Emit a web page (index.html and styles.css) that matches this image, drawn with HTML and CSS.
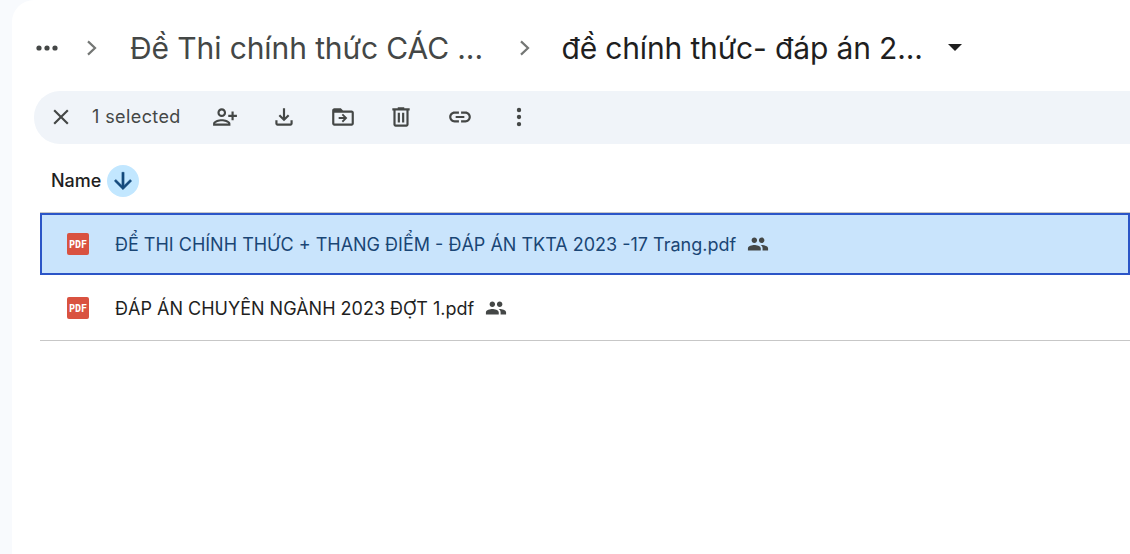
FILE: index.html
```html
<!DOCTYPE html>
<html lang="vi">
<head>
<meta charset="utf-8">
<title>Drive</title>
<link rel="stylesheet" href="styles.css">
</head>
<body>
<main class="card">
  <nav class="crumbs">
    <svg class="dots" viewBox="0 0 22 6"><circle cx="3" cy="3" r="2.6"/><circle cx="11" cy="3" r="2.6"/><circle cx="19" cy="3" r="2.6"/></svg>
    <svg class="chev" viewBox="0 0 12 16"><path d="M2 1.400 9 8l-7 6.600" fill="none" stroke-width="2.200"/></svg>
    <span class="crumb parent">Đề Thi chính thức CÁC ...</span>
    <svg class="chev chev-2" viewBox="0 0 12 16"><path d="M2 1.400 9 8l-7 6.600" fill="none" stroke-width="2.200"/></svg>
    <span class="crumb current">đề chính thức- đáp án 2...</span>
    <svg class="caret" viewBox="0 0 14 7"><path d="M0 0h14L7 7z"/></svg>
  </nav>

  <div class="toolbar">
    <svg class="tool close" viewBox="0 0 24 24"><path d="M19 6.410 17.590 5 12 10.590 6.410 5 5 6.410 10.590 12 5 17.590 6.410 19 12 13.410 17.590 19 19 17.590 13.410 12z"/></svg>
    <span class="count">1 selected</span>
    <svg class="tool flip" viewBox="0 0 24 24"><path d="M15 12c2.210 0 4-1.790 4-4s-1.790-4-4-4-4 1.790-4 4 1.790 4 4 4zm0-6c1.100 0 2 .9 2 2s-.9 2-2 2-2-.9-2-2 .9-2 2-2zm0 8c-2.670 0-8 1.340-8 4v2h16v-2c0-2.660-5.330-4-8-4zm-6 4c.22-.72 3.310-2 6-2 2.700 0 5.800 1.290 6 2H9zm-3-3v-3h3v-2H6V7H4v3H1v2h3v3h2z"/></svg>
    <svg class="tool" viewBox="0 0 24 24"><path d="M18 15v3H6v-3H4v3c0 1.100.9 2 2 2h12c1.100 0 2-.9 2-2v-3h-2zm-1-4-1.410-1.410L13 12.170V4h-2v8.170L8.410 9.590 7 11l5 5 5-5z"/></svg>
    <svg class="tool" viewBox="0 0 24 24"><path d="M20 6h-8l-2-2H4c-1.100 0-2 .9-2 2v12c0 1.100.9 2 2 2h16c1.100 0 2-.9 2-2V8c0-1.100-.9-2-2-2zm0 12H4V8h16v10z"/><path d="M12 9 10.800 10.200l1.900 1.900H8v1.800h4.700l-1.900 1.900L12 17l4-4z"/></svg>
    <svg class="tool" viewBox="0 0 24 24"><path d="M15 4V3H9v1H4v2h1v13c0 1.100.9 2 2 2h10c1.100 0 2-.9 2-2V6h1V4h-5zm2 15H7V6h10v13zM9 8h2v9H9zm4 0h2v9h-2z"/></svg>
    <svg class="tool" viewBox="0 0 24 24"><path d="M17 7h-4v2h4c1.650 0 3 1.350 3 3s-1.350 3-3 3h-4v2h4c2.760 0 5-2.240 5-5s-2.240-5-5-5zm-6 8H7c-1.650 0-3-1.350-3-3s1.350-3 3-3h4V7H7c-2.760 0-5 2.240-5 5s2.240 5 5 5h4v-2zm-3-4h8v2H8z"/></svg>
    <svg class="tool" viewBox="0 0 24 24"><circle cx="12" cy="5.500" r="2"/><circle cx="12" cy="12" r="2"/><circle cx="12" cy="18.500" r="2"/></svg>
  </div>

  <div class="list-head">
    <span class="name-label">Name</span>
    <span class="sort"><svg viewBox="0 0 24 24"><path d="m20 12-1.410-1.410L13 16.170V4h-2v12.170l-5.580-5.590L4 12l8 8 8-8z"/></svg></span>
  </div>

  <div class="rows">
    <div class="row selected">
      <span class="pdf">PDF</span>
      <span class="file">ĐỂ THI CHÍNH THỨC + THANG ĐIỂM - ĐÁP ÁN TKTA 2023 -17 Trang.pdf</span>
      <svg class="people" viewBox="0 0 24 24"><path d="M16 11c1.660 0 2.990-1.340 2.990-3S17.660 5 16 5c-1.660 0-3 1.340-3 3s1.340 3 3 3zm-8 0c1.660 0 2.990-1.340 2.990-3S9.660 5 8 5C6.340 5 5 6.340 5 8s1.340 3 3 3zm0 2c-2.330 0-7 1.170-7 3.500V19h14v-2.500c0-2.330-4.670-3.500-7-3.500zm8 0c-.29 0-.62.020-.97.050 1.160.84 1.970 1.970 1.970 3.450V19h6v-2.500c0-2.330-4.670-3.500-7-3.500z"/></svg>
    </div>
    <div class="row">
      <span class="pdf">PDF</span>
      <span class="file">ĐÁP ÁN CHUYÊN NGÀNH 2023 ĐỢT 1.pdf</span>
      <svg class="people" viewBox="0 0 24 24"><path d="M16 11c1.660 0 2.990-1.340 2.990-3S17.660 5 16 5c-1.660 0-3 1.340-3 3s1.340 3 3 3zm-8 0c1.660 0 2.990-1.340 2.990-3S9.660 5 8 5C6.340 5 5 6.340 5 8s1.340 3 3 3zm0 2c-2.330 0-7 1.170-7 3.500V19h14v-2.500c0-2.330-4.670-3.500-7-3.500zm8 0c-.29 0-.62.020-.97.050 1.160.84 1.970 1.970 1.970 3.450V19h6v-2.500c0-2.330-4.670-3.500-7-3.500z"/></svg>
    </div>
  </div>
</main>
</body>
</html>
```
FILE: styles.css
```css
* { box-sizing: border-box; }
html, body { height: 100%; }
body {
  margin: 0;
  overflow: hidden;
  background: #f8fafd;
  font-family: Inter, Roboto, "Noto Sans", sans-serif;
  color: #1f1f1f;
}
svg { display: block; flex: none; fill: currentColor; }
.card {
  height: 100%;
  margin-left: 12px;
  background: #fff;
  border-top-left-radius: 22px;
  overflow: hidden;
}
.crumbs {
  height: 91px;
  display: flex;
  align-items: center;
  padding: 4px 0 0 24px;
  color: #444746;
}
.dots { width: 22px; height: 6px; }
.chev { width: 12px; height: 16px; margin-left: 28px; color: #747775; stroke: currentColor; fill: none; }
.chev-2 { margin-left: 36px; }
.crumb {
  font-size: 30px;
  line-height: 40px;
  white-space: nowrap;
  letter-spacing: -0.1px;
}
.parent { margin-left: 32px; color: #444746; }
.current { margin-left: 30.5px; color: #1f1f1f; letter-spacing: -0.15px; }
.caret { width: 14px; height: 7px; margin-left: 25px; color: #1f1f1f; }
.toolbar {
  height: 53px;
  margin: 0 -40px 0 22px;
  padding: 0 0 2px 14px;
  display: flex;
  align-items: center;
  background: #f0f4f9;
  border-radius: 26px;
  color: #444746;
}
.tool { width: 26px; height: 26px; margin-right: 32.8px; }
.close { margin-right: 18px; }
.count { font-size: 18px; width: 120px; color: #444746; letter-spacing: 0.4px; }
.flip { transform: scaleX(-1); }
.list-head {
  height: 69px;
  display: flex;
  align-items: center;
  padding: 5px 0 0 11px;
  margin-left: 28px;
  border-bottom: 1px solid #c7c7c7;
}
.name-label { font-size: 18px; font-weight: 500; color: #1f1f1f; }
.sort {
  width: 32px;
  height: 32px;
  margin-left: 6px;
  border-radius: 50%;
  background: #c2e7ff;
  color: #144a7c;
  display: flex;
  align-items: center;
  justify-content: center;
}
.sort svg { width: 26px; height: 26px; stroke: currentColor; stroke-width: 0.5; }
.rows { margin-left: 28px; }
.row {
  display: flex;
  align-items: center;
  height: 65px;
  padding-left: 27px;
  border-bottom: 1px solid #c7c7c7;
}
.selected {
  height: 62px;
  margin-bottom: 1px;
  padding-left: 25px;
  background: #c9e4fc;
  border: 2px solid #2b55c7;
  color: #1a4675;
}
.pdf {
  width: 22px;
  height: 22px;
  border-radius: 2px;
  background: #d95240;
  color: #fff;
  font-family: "DejaVu Sans Mono", monospace;
  font-size: 10px;
  font-weight: 700;
  display: flex;
  align-items: center;
  justify-content: center;
}
.file { margin-left: 26px; font-size: 18px; white-space: nowrap; }
.people { width: 22px; height: 22px; margin-left: 11px; color: #444746; }
```
